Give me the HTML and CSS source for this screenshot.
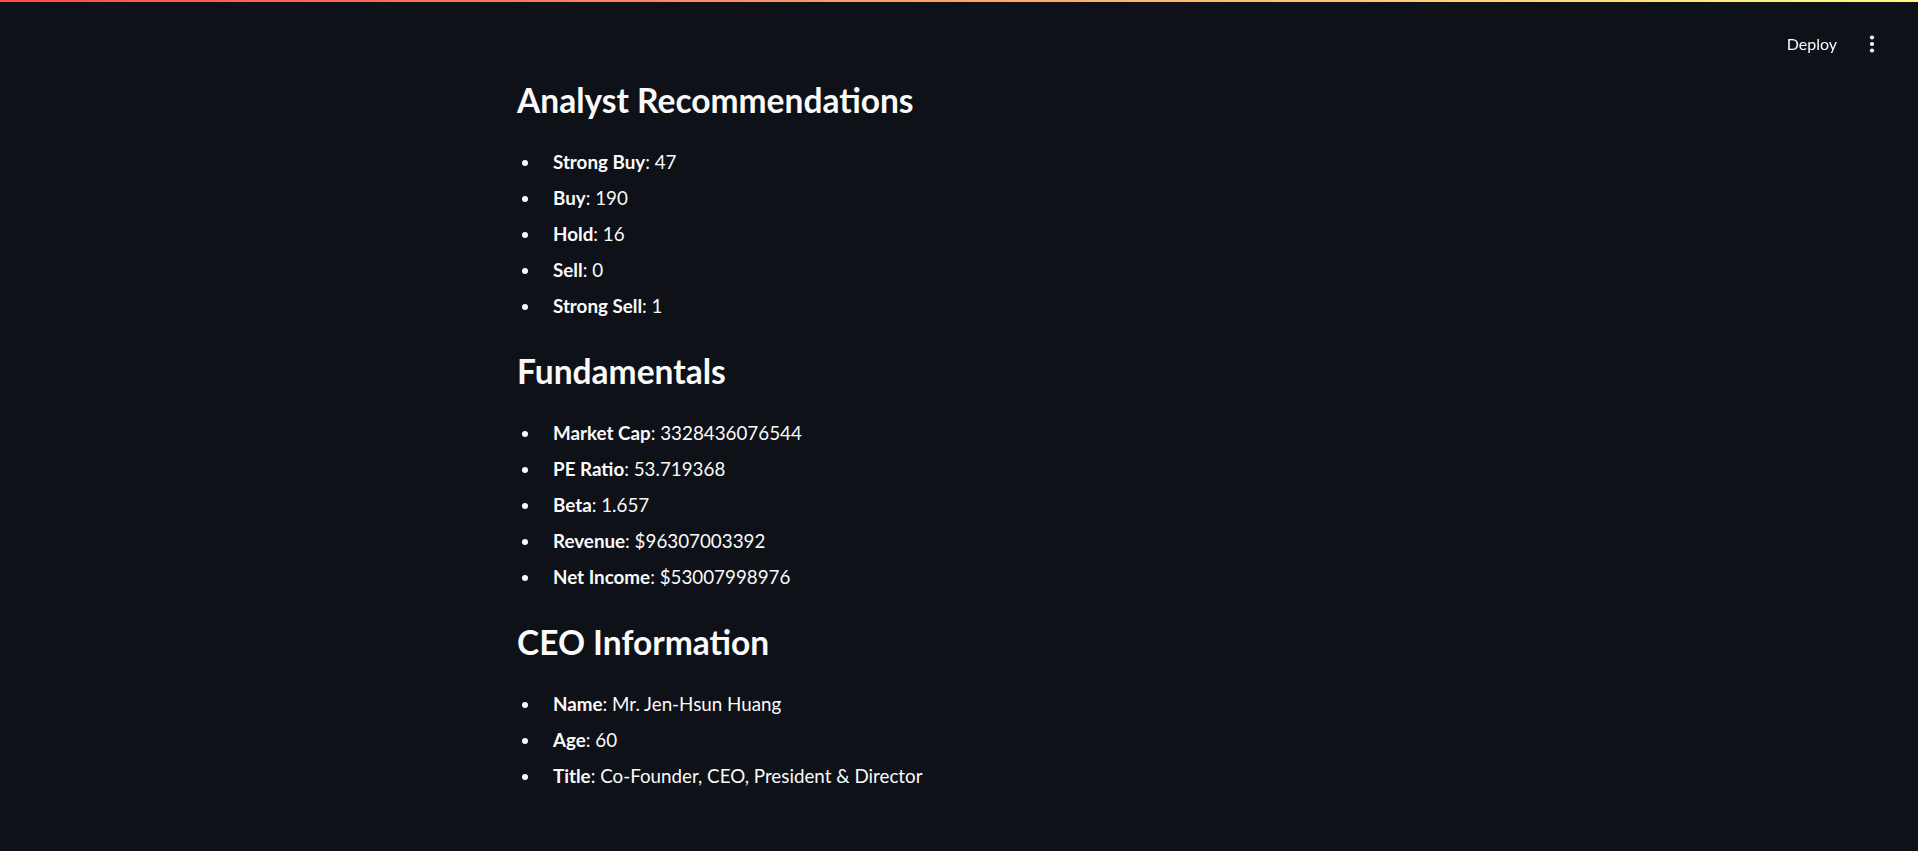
FILE: index.html
```html
<!DOCTYPE html>
<html lang="en">
<head>
<meta charset="utf-8">
<title>Stock Info</title>
<link rel="stylesheet" href="styles.css">
</head>
<body>
<div class="decoration"></div>
<header class="app-header">
  <button class="deploy">Deploy</button>
  <button class="menu" aria-label="Main menu">
    <svg width="20" height="20" viewBox="0 0 20 20"><circle cx="10" cy="3.5" r="2.1" fill="#fafafa"/><circle cx="10" cy="10" r="2.1" fill="#fafafa"/><circle cx="10" cy="16.5" r="2.1" fill="#fafafa"/></svg>
  </button>
</header>
<main class="block-container">
  <section class="section">
    <h3 class="heading">Analyst Recommendations</h3>
    <ul class="list">
      <li><strong>Strong Buy</strong>: 47</li>
      <li><strong>Buy</strong>: 190</li>
      <li><strong>Hold</strong>: 16</li>
      <li><strong>Sell</strong>: 0</li>
      <li><strong>Strong Sell</strong>: 1</li>
    </ul>
  </section>
  <section class="section">
    <h3 class="heading">Fundamentals</h3>
    <ul class="list">
      <li><strong>Market Cap</strong>: 3328436076544</li>
      <li><strong>PE Ratio</strong>: 53.719368</li>
      <li><strong>Beta</strong>: 1.657</li>
      <li><strong>Revenue</strong>: $96307003392</li>
      <li><strong>Net Income</strong>: $53007998976</li>
    </ul>
  </section>
  <section class="section">
    <h3 class="heading">CEO Information</h3>
    <ul class="list">
      <li><strong>Name</strong>: Mr. Jen-Hsun Huang</li>
      <li><strong>Age</strong>: 60</li>
      <li><strong>Title</strong>: Co-Founder, CEO, President &amp; Director</li>
    </ul>
  </section>
</main>
</body>
</html>
```

FILE: styles.css
```css
html, body {
  margin: 0;
  padding: 0;
  background: #0e1117;
  color: #fafafa;
  font-family: "Lato", "Noto Sans", sans-serif;
}
body {
  min-height: 851px;
}
.decoration {
  position: fixed;
  top: 0;
  left: 0;
  right: 0;
  height: 2px;
  background: linear-gradient(90deg, #ff4b4b, #fffd80);
  z-index: 10;
}
.app-header {
  position: fixed;
  top: 0;
  left: 0;
  right: 0;
  height: 75px;
  display: flex;
  justify-content: flex-end;
  align-items: flex-start;
  padding: 30px 36px 0 0;
  box-sizing: border-box;
  gap: 17px;
}
.deploy {
  background: transparent;
  border: none;
  color: #fafafa;
  font-family: inherit;
  font-size: 16px;
  padding: 4px 8px;
  line-height: 20px;
  cursor: pointer;
}
.menu {
  background: transparent;
  border: none;
  padding: 4px 0;
  display: flex;
  align-items: center;
}
.block-container {
  width: 920px;
  margin: 0 auto;
  padding: 79px 20px 0 18px;
  box-sizing: border-box;
}
.section {
  margin-bottom: 28px;
}
.heading {
  margin: 0;
  font-size: 33.5px;
  font-weight: 700;
  line-height: 42px;
}
.list {
  list-style: disc;
  margin: 25px 0 0;
  padding: 0;
}
.list li {
  margin: 4px 0 4px 24px;
  padding-left: 12px;
  font-size: 18.8px;
  line-height: 32px;
}
.list li strong {
  font-weight: 700;
}
```
